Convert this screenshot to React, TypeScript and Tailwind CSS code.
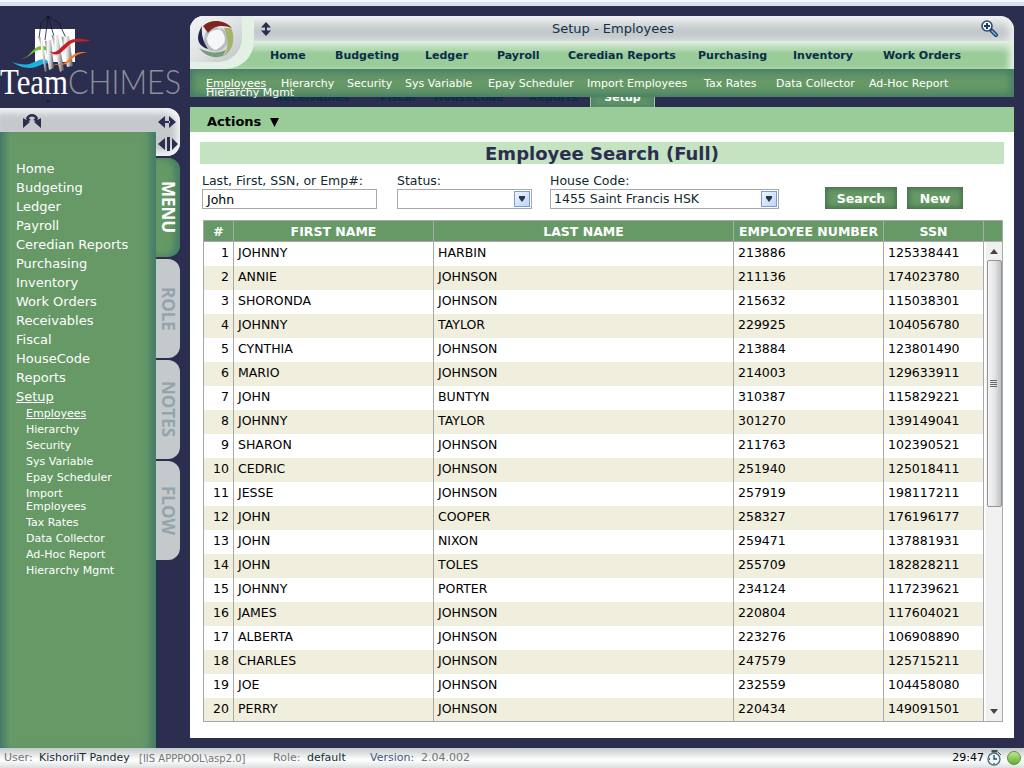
import React from "react";

const mainNav: [string, string][] = [
  ["Home", "w-[33px] ml-[80px]"],
  ["Budgeting", "w-[58px] ml-[32px]"],
  ["Ledger", "w-[40px] ml-[32px]"],
  ["Payroll", "w-[40px] ml-[32px]"],
  ["Ceredian Reports", "w-[98px] ml-[31px]"],
  ["Purchasing", "w-[63px] ml-[32px]"],
  ["Inventory", "w-[58px] ml-[32px]"],
  ["Work Orders", "w-[73px] ml-[32px]"],
];

const subNav: [string, string][] = [
  ["Employees", "w-[60px] underline"],
  ["Hierarchy", "w-[51px]"],
  ["Security", "w-[43px]"],
  ["Sys Variable", "w-[68px]"],
  ["Epay Scheduler", "w-[84px]"],
  ["Import Employees", "w-[102px]"],
  ["Tax Rates", "w-[57px]"],
  ["Data Collector", "w-[78px]"],
  ["Ad-Hoc Report", "w-[81px]"],
];

const menu = ["Home", "Budgeting", "Ledger", "Payroll", "Ceredian Reports", "Purchasing", "Inventory", "Work Orders", "Receivables", "Fiscal", "HouseCode", "Reports"];
const subMenu = ["Hierarchy", "Security", "Sys Variable", "Epay Scheduler"];
const subMenuEnd = ["Tax Rates", "Data Collector", "Ad-Hoc Report", "Hierarchy Mgmt"];

const rows: [string, string, string, string][] = [
  ["JOHNNY", "HARBIN", "213886", "125338441"],
  ["ANNIE", "JOHNSON", "211136", "174023780"],
  ["SHORONDA", "JOHNSON", "215632", "115038301"],
  ["JOHNNY", "TAYLOR", "229925", "104056780"],
  ["CYNTHIA", "JOHNSON", "213884", "123801490"],
  ["MARIO", "JOHNSON", "214003", "129633911"],
  ["JOHN", "BUNTYN", "310387", "115829221"],
  ["JOHNNY", "TAYLOR", "301270", "139149041"],
  ["SHARON", "JOHNSON", "211763", "102390521"],
  ["CEDRIC", "JOHNSON", "251940", "125018411"],
  ["JESSE", "JOHNSON", "257919", "198117211"],
  ["JOHN", "COOPER", "258327", "176196177"],
  ["JOHN", "NIXON", "259471", "137881931"],
  ["JOHN", "TOLES", "255709", "182828211"],
  ["JOHNNY", "PORTER", "234124", "117239621"],
  ["JAMES", "JOHNSON", "220804", "117604021"],
  ["ALBERTA", "JOHNSON", "223276", "106908890"],
  ["CHARLES", "JOHNSON", "247579", "125715211"],
  ["JOE", "JOHNSON", "232559", "104458080"],
  ["PERRY", "JOHNSON", "220434", "149091501"],
];

function Logo() {
  return (
    <svg className="block" width="190" height="101" viewBox="0 6 190 101">
      <defs>
        <linearGradient id="tube" x1="0" x2="1">
          <stop offset="0" stopColor="#6f7074" />
          <stop offset="0.3" stopColor="#ffffff" />
          <stop offset="0.6" stopColor="#c8c8ca" />
          <stop offset="1" stopColor="#4c4c50" />
        </linearGradient>
      </defs>
      <rect x="35" y="29" width="40" height="33" fill="#fff" />
      <g fill="none" stroke="#15162a" strokeWidth="0.8">
        <path d="M48 17L41 23L39 38M48 17L45 40M48 17L54 36M48 17L59 23L66 38" />
      </g>
      <path d="M45.500 18L48 15.500L51 18Z" fill="#15162a" />
      <path d="M11 62C20 64 25 66 32 63C40 60 44 56 51 64C43 61 39 68 30 68C22 68 18 65 11 62Z" fill="#18b3e2" />
      <path d="M18 58C29 62 32 45 42 46C47 46 49 50 53 47C49 53 44 49 39 50C32 51 28 61 18 58Z" fill="#76bd3a" />
      <g fill="url(#tube)">
        <path d="M39 37L42 37L47 71L45 72Z" />
        <path d="M45 41L51 40L54 68L49 70Z" />
        <path d="M51.500 35L58 35L64 70L60 72Z" />
        <path d="M61.500 37L69 36L73 66L67 67Z" />
      </g>
      <path d="M49 51C59 57 63 39 76 39C83 38 88 41 92 40C84 43 78 40 72 43C65 47 61 57 53 54Z" fill="#c32029" />
      <path d="M51 66C58 62 62 67 68 60C75 51 81 52 88 52C80 53 76 55 71 60C64 68 58 63 51 66Z" fill="#ef7b22" />
      <path d="M45.500 102L48 100L51 102Z" fill="#15162a" />
      <text x="0" y="93.500" textLength="68" lengthAdjust="spacingAndGlyphs" fontSize="35" fontFamily="'Liberation Serif', serif" fill="#fff">Team</text>
      <text x="68" y="93.500" textLength="113" lengthAdjust="spacingAndGlyphs" fontSize="33" fontWeight="300" fontFamily="Lato, sans-serif" fill="#8e919d">CHIMES</text>
    </svg>
  );
}

function Swirl() {
  return (
    <svg className="block ml-[7px] mt-[4px]" width="38" height="39" viewBox="0 0 38 39">
      <g fill="#b9bcbe">
        <path d="M8 14C12 7 18 6 24 9L18 10L9 18Z" />
        <path d="M24 8C31 12 32 18 29 26L27 19L23 11Z" />
        <path d="M30 23C27 31 19 33 13 30L20 29L28 23Z" />
        <path d="M14 31C7 28 6 21 8 15L11 23L17 29Z" />
      </g>
      <path d="M25 11C31 20 27 25 19 30C10 27 9 20 12 13C17 9 21 9 25 11Z" fill="#f5f6f7" />
      <path d="M6 6C14-2 28 0 35 8C25 4 16 6 11 13Z" fill="#7d2620" />
      <path d="M27 8L34 8C39 17 36 31 27 36C32 28 31 17 27 8Z" fill="#a4b46b" />
      <path d="M29 30L26 36C17 39 8 36 2 28C12 33 21 34 29 30Z" fill="#799c7f" />
      <path d="M5 6C-1 16-1 25 11 29C6 22 4 14 5 6Z" fill="#22234e" />
    </svg>
  );
}

function Magnifier() {
  return (
    <svg className="block" width="17" height="17" viewBox="0 0 17 17">
      <path d="M10 10L15 15" stroke="#203c66" strokeWidth="4" strokeLinecap="round" />
      <path d="M11 11L15 15" stroke="#7aaddd" strokeWidth="1.700" strokeLinecap="round" />
      <circle cx="6" cy="6" r="5" fill="#f4f7fa" stroke="#334a6c" strokeWidth="1.600" />
      <path d="M6 3V9M3 6H9" stroke="#183f65" strokeWidth="2" />
    </svg>
  );
}

function Select({ value, width }: { value: string; width: string }) {
  return (
    <div className={"flex h-5 items-center justify-between border border-[#a9a9a9] bg-white pl-[3px] pr-[1px] " + width}>
      <span className="text-[12.5px] leading-[18px]">{value}</span>
      <span className="flex h-4 w-4 items-center justify-center border border-[#7b9ccd] bg-linear-to-br from-[#edf4ff] to-[#bfd3fb]">
        <svg width="8" height="6" viewBox="0 0 8 6"><path d="M1 0H7V2L4 6L1 2Z" fill="#25364f" /></svg>
      </span>
    </div>
  );
}

function SideTab({ label }: { label: string }) {
  return (
    <div className="flex h-[99px] w-6 items-center justify-center rounded-r-[12px] bg-[#c4c9cc] font-['Open_Sans',sans-serif] text-[17px] font-bold text-[#94a4ac] [writing-mode:vertical-rl]">
      {label}
    </div>
  );
}

function Sidebar() {
  return (
    <aside className="flex h-full w-[180px] shrink-0 flex-col">
      <div className="h-[101px] w-[190px]"><Logo /></div>
      <div className="mt-px flex h-6 w-[180px] items-center rounded-tr-[13px] bg-[#c4c9cc] shadow-[inset_-4px_5px_6px_#f0f2f3]">
        <svg className="ml-[23px]" width="18" height="15" viewBox="0 0 18 15">
          <path d="M4 6C6 1 12 1 14 6" fill="none" stroke="#2c2e4f" strokeWidth="2.500" />
          <path d="M0 5L7 9L0 15ZM18 5L11 9L18 15ZM4 4L8 7L3 9ZM14 4L10 7L15 9Z" fill="#2c2e4f" />
        </svg>
        <svg className="ml-[117px] mt-1" width="18" height="12" viewBox="0 0 18 12">
          <path d="M0 6L7 0V12ZM18 6L11 0V12ZM6 5H12V7H6Z" fill="#2c2e4f" />
        </svg>
      </div>
      <div className="flex grow">
        <nav className="w-[156px] bg-linear-to-r from-[#437b67] via-[#669966] via-[10px] to-[#669966] shadow-[inset_-11px_0_9px_-5px_#437b67] pt-[27px] pl-4 text-[13px] text-white">
          {menu.map((m) => <div key={m} className="h-[19px] leading-[19px] whitespace-nowrap">{m}</div>)}
          <div className="h-[19px] leading-[19px] underline">Setup</div>
          <div className="pl-[10px] text-[11px] leading-4">
            <div className="underline">Employees</div>
            {subMenu.map((m) => <div key={m}>{m}</div>)}
            <div className="mt-[1px] mb-[2px] leading-[13px]">Import<br />Employees</div>
            {subMenuEnd.map((m) => <div key={m}>{m}</div>)}
          </div>
        </nav>
        <div className="flex w-6 flex-col">
          <div className="flex h-6 items-center justify-center rounded-br-[13px] bg-[#c4c9cc] shadow-[inset_-4px_-5px_6px_#f0f2f3]">
            <svg width="20" height="14" viewBox="0 0 20 14"><path d="M0 7L7 1V13ZM20 7L14 1V13ZM9 0H12V14H9Z" fill="#2c2e4f" /></svg>
          </div>
          <div className="mt-[2px] mb-[2px] flex h-[99px] items-center justify-center rounded-r-[12px] bg-[#669966] font-['Open_Sans',sans-serif] text-[17px] font-bold text-white shadow-[inset_-5px_0_7px_#437b67] [writing-mode:vertical-rl]">MENU</div>
          <div className="flex flex-col gap-[2px]">
            <SideTab label="ROLE" />
            <SideTab label="NOTES" />
            <SideTab label="FLOW" />
          </div>
        </div>
      </div>
    </aside>
  );
}

function Header() {
  return (
    <header className="relative h-[91px] shrink-0">
      <div className="h-[25px] rounded-t-[14px] bg-linear-to-b from-[#f1f2f3] via-[#c4c9cc] via-[55%] to-[#c4c9cc] shadow-[inset_-5px_0_7px_#eceeef]">
        <div className="flex h-full items-center text-[13px] text-[#12304c]">
          <svg className="ml-[71px]" width="10" height="14" viewBox="0 0 10 14"><path d="M5 0L10 5.500H0ZM5 14L10 8.500H0Z" fill="#2c2e4f" /><path d="M5 4V10" stroke="#2c2e4f" strokeWidth="2" /></svg>
          <span className="ml-[281px] w-[126px] whitespace-nowrap">Setup - Employees</span>
          <span className="ml-[303px]"><Magnifier /></span>
        </div>
      </div>
      <div className="flex h-7 bg-linear-to-b from-[#e2f0e2] via-[#99cc99] via-[45%] to-[#99cc99] pt-[7px] text-[11px] leading-4 font-bold text-[#0b2c49] shadow-[inset_-7px_0_6px_-2px_#e0f0e0]">
        {mainNav.map(([t, c]) => <span key={t} className={"whitespace-nowrap " + c}>{t}</span>)}
      </div>
      <div className="absolute top-0 left-0 h-[53px] w-[64px] rounded-tl-[14px] rounded-br-[28px] bg-[#e3f0e4]">
        <div className="h-[46px] w-[52px] overflow-hidden rounded-tl-[14px] rounded-br-[24px] bg-linear-to-br from-[#f4f5f6] via-[#e0e2e3] to-[#bfc4c7]"><Swirl /></div>
      </div>
      <div className="flex h-7 gap-[15px] bg-[#669966] pt-[7px] pl-4 text-[11px] leading-4 text-white shadow-[inset_0_0_9px_3px_#437b67]">
        {subNav.map(([t, c]) => <span key={t} className={"whitespace-nowrap " + c}>{t}</span>)}
      </div>
      <span className="absolute top-[69px] left-4 text-[11px] leading-4 text-white">Hierarchy Mgmt</span>
      <div className="flex h-[10px] overflow-hidden text-[11px] font-bold text-[#0b2c49]">
        <span className="-mt-[7px] ml-[85px] w-[96px] leading-4">Receivables</span>
        <span className="-mt-[7px] ml-0 w-[63px] pl-[9px] leading-4">Fiscal</span>
        <span className="-mt-[7px] w-[95px] leading-4">HouseCode</span>
        <span className="-mt-[7px] w-[61px] leading-4">Reports</span>
        <span className="flex h-[10px] w-[65px] justify-center overflow-hidden border-x border-[#99cc99] bg-[#669966] text-white shadow-[inset_0_0_8px_#437b67]"><span className="-mt-[7px] leading-4">Setup</span></span>
      </div>
    </header>
  );
}

function EmployeeGrid() {
  const cols = "grid grid-cols-[30px_200px_300px_150px_100px]";
  return (
    <div className="ml-[13px] h-[502px] w-[800px] border border-[#a9a9a9] text-[12.5px] text-black">
      <div className="grid h-[21px] grid-cols-[30px_200px_300px_150px_100px_18px] border-b border-[#a9a9a9] bg-[#669966] text-center leading-[21px] font-bold text-white">
        {["#", "FIRST NAME", "LAST NAME", "EMPLOYEE NUMBER", "SSN"].map((h) => (
          <div key={h} className="border-r border-[#a9a9a9] whitespace-nowrap">{h}</div>
        ))}
      </div>
      <div className="flex h-[479px]">
        <div className="w-[780px]">
          {rows.map((r, i) => (
            <div key={r[3]} className={cols + " h-6 leading-[21px] last:h-[23px] " + (i % 2 ? "bg-[#f0eedd]" : "bg-white")}>
              <div className="border-r border-[#a9a9a9] pr-1 text-right">{i + 1}</div>
              {r.map((v, j) => <div key={j} className="border-r border-[#a9a9a9] pl-1">{v}</div>)}
            </div>
          ))}
        </div>
        <div className="ml-[2px] flex w-4 flex-col items-center bg-[#f0f0f0]">
          <svg className="mt-[7px]" width="8" height="5" viewBox="0 0 8 5"><path d="M0 5L4 0L8 5Z" fill="#444" /></svg>
          <div className="mt-[6px] flex h-[247px] w-[15px] items-center justify-center rounded-[2px] border border-[#949494] bg-linear-to-r from-[#f5f5f5] via-[#e4e5e7] to-[#bec0c3]">
            <svg width="8" height="8" viewBox="0 0 8 8"><path d="M0 .5H7M0 2.500H7M0 4.500H7M0 6.500H7" stroke="#66686b" /></svg>
          </div>
          <svg className="mt-auto mb-[7px]" width="8" height="5" viewBox="0 0 8 5"><path d="M0 0H8L4 5Z" fill="#444" /></svg>
        </div>
      </div>
    </div>
  );
}

function Footer() {
  return (
    <footer className="flex h-5 items-center bg-linear-to-b from-[#c5cacc] via-[#ffffff] via-[60%] to-[#dcdedf] pl-1 text-[11px] whitespace-nowrap text-[#747474]">
      <span className="w-[35px]">User:</span>
      <span className="w-[100px] text-[#132c34]">KishoriiT Pandey</span>
      <span className="w-[134px] text-[10px]">[IIS APPPOOL\asp2.0]</span>
      <span className="w-[34px]">Role:</span>
      <span className="w-[63px] text-[#132c34]">default</span>
      <span className="w-[51px] text-[#41587e]">Version:</span>
      <span>2.04.002</span>
      <span className="ml-auto text-black">29:47</span>
      <svg className="ml-[3px]" width="15" height="16" viewBox="0 0 15 16">
        <path d="M5 0H10V2H5ZM11 2L14 5" fill="#3c5060" stroke="#3c5060" />
        <circle cx="7" cy="9" r="6" fill="#edf6fb" stroke="#566a78" strokeWidth="1.400" />
        <path d="M7 5V9H10M7 13V14M3 9H2" fill="none" stroke="#24485c" strokeWidth="1.300" />
      </svg>
      <span className="mr-[3px] ml-[5px] h-[14px] w-[14px] rounded-full border border-[#579130] bg-linear-to-b from-[#c1e794] to-[#65ad2e]" />
    </footer>
  );
}

export default function App() {
  return (
    <div className="flex h-[768px] w-[1024px] flex-col overflow-hidden bg-[#2c2e4f] font-['DejaVu_Sans',sans-serif]">
      <div className="h-[6px] shrink-0 border-t-2 border-[#f3f6fd] bg-[#d7e0f0]" />
      <div className="flex h-[742px] shrink-0">
        <Sidebar />
        <main className="ml-[10px] flex w-[824px] flex-col pt-[10px]">
          <Header />
          <div className="flex h-[25px] shrink-0 items-center bg-[#99cc99] pt-[5px] pl-[17px] text-[13px] font-bold text-black">
            Actions <svg className="ml-[9px]" width="9" height="9" viewBox="0 0 9 9"><path d="M0 0H9L4.500 9Z" /></svg>
          </div>
          <section className="h-[606px] shrink-0 bg-white pt-[10px]">
            <h1 className="mx-[10px] h-[22px] bg-[#c3e3c1] text-center text-[18px] leading-[23px] font-bold text-[#2c2e4f]">Employee Search (Full)</h1>
            <div className="flex h-14 pt-[9px] pl-3 text-[12.500px] text-[#10282f]">
              <div className="w-[195px]">
                <div className="h-4 leading-4">Last, First, SSN, or Emp#:</div>
                <div className="h-5 w-[175px] border border-[#a9a9a9] pl-1 leading-[19px] text-black">John</div>
              </div>
              <div className="w-[153px]"><div className="h-4 leading-4">Status:</div><Select value="" width="w-[135px]" /></div>
              <div className="w-[275px]"><div className="h-4 leading-4">House Code:</div><Select value="1455 Saint Francis HSK" width="w-[229px]" /></div>
              <div className="flex gap-[10px] pt-[14px] text-center leading-[23px] font-bold text-white">
                <button className="h-[22px] w-[72px] bg-[#669966] shadow-[inset_0_0_5px_2px_#47714d]">Search</button>
                <button className="h-[22px] w-[56px] bg-[#669966] shadow-[inset_0_0_5px_2px_#47714d]">New</button>
              </div>
            </div>
            <EmployeeGrid />
          </section>
        </main>
      </div>
      <Footer />
    </div>
  );
}
